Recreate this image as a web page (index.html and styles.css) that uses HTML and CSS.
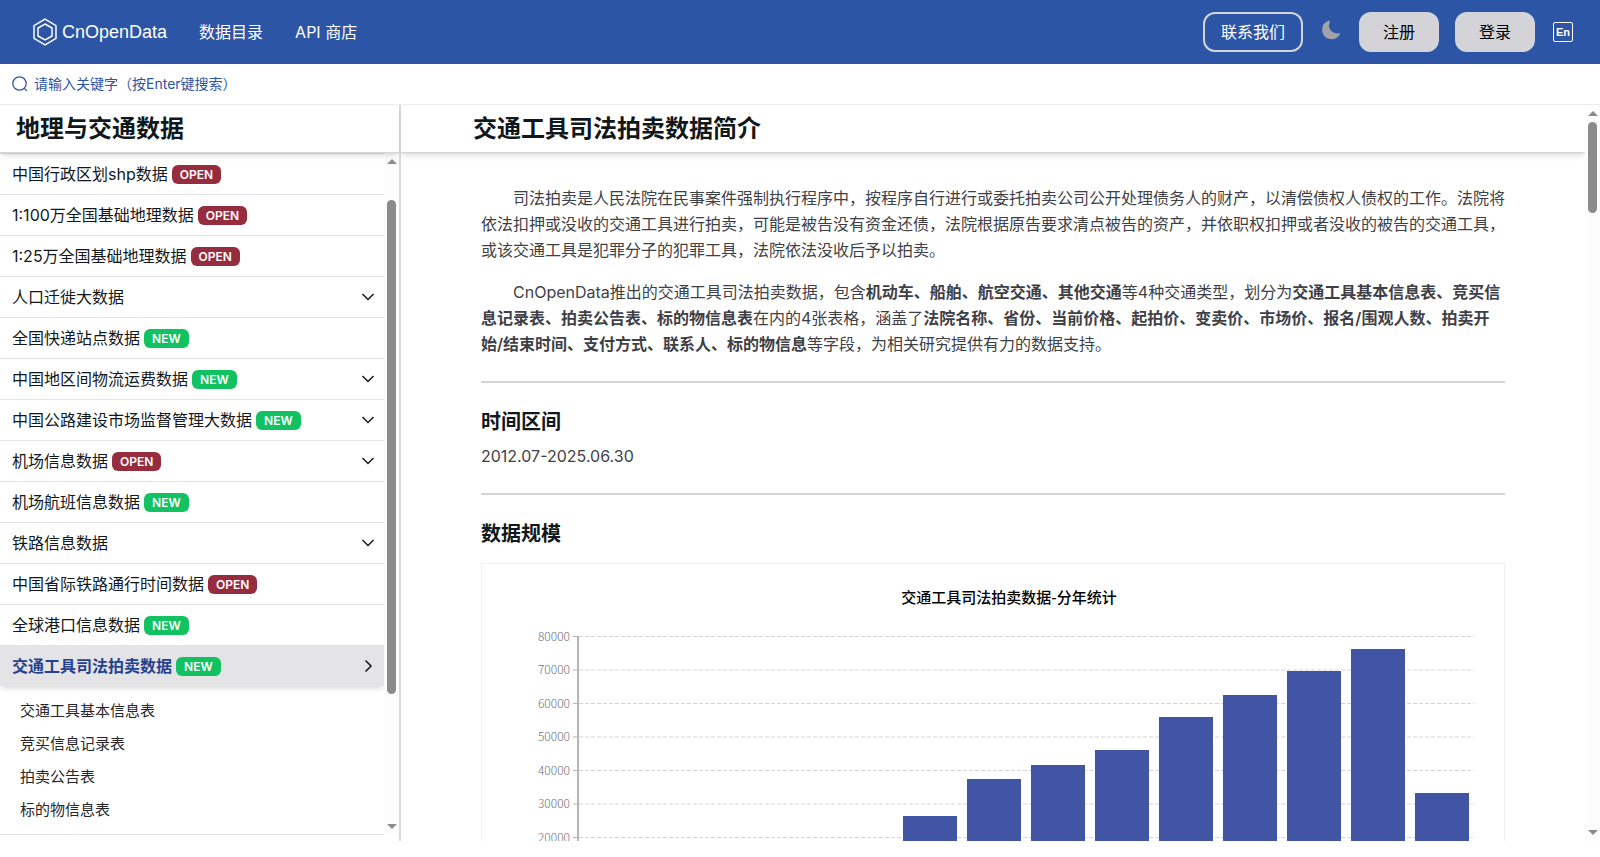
FILE: index.html
```
<!DOCTYPE html>
<html lang="zh-CN">
<head>
    <meta charset="UTF-8">
    <meta name="viewport" content="width=device-width, initial-scale=1.0">
    <title>交通工具司法拍卖数据 - CnOpenData</title>
    <link rel="stylesheet" href="styles.css">
</head>
<body>
    <header class="navbar">
        <a class="logo" href="#">
            <svg class="logo-icon" viewBox="0 0 24 28" aria-hidden="true">
                <path d="M12 1.2 23 7.6v12.8L12 26.8 1 20.4V7.6z"/>
                <path d="M12 6 19 10v8l-7 4-7-4v-8z"/>
            </svg>
            <span class="logo-text">CnOpenData</span>
        </a>
        <nav class="nav-links">
            <a href="#">数据目录</a>
            <a href="#">API 商店</a>
        </nav>
        <div class="nav-actions">
            <button type="button" class="button button-outline">联系我们</button>
            <button type="button" class="icon-button" aria-label="切换主题">
                <svg class="moon-icon" viewBox="0 0 24 24" aria-hidden="true">
                    <path d="M21.53 15.93c-.16-.27-.61-.69-1.73-.49a8.46 8.46 0 0 1-1.88.13 8.41 8.41 0 0 1-5.91-2.82 8.07 8.07 0 0 1-1.44-8.66c.44-1.01.13-1.54-.09-1.76s-.77-.55-1.83-.11a10.32 10.32 0 0 0-6.32 10.21 10.48 10.48 0 0 0 7.04 8.99 10 10 0 0 0 2.89.55c.16.01.32.02.48.02a10.5 10.5 0 0 0 8.47-4.27c.67-.93.49-1.519.32-1.79z"/>
                </svg>
            </button>
            <button type="button" class="button">注册</button>
            <button type="button" class="button">登录</button>
            <button type="button" class="icon-button" aria-label="English">
                <span class="lang-icon">En</span>
            </button>
        </div>
    </header>

    <form class="search-bar" role="search">
        <label class="search-label" for="keyword" aria-label="搜索">
            <svg class="search-icon" viewBox="0 0 16 16" aria-hidden="true">
                <circle cx="7.5" cy="7.5" r="6.7"/>
                <path d="m12.4 12.4 2.4 2.4"/>
            </svg>
        </label>
        <input type="text" id="keyword" class="search-input" placeholder="请输入关键字（按Enter键搜索）">
    </form>

    <div class="workspace">
        <aside class="sidebar">
            <h2 class="sidebar-title">地理与交通数据</h2>
            <div class="sidebar-body">
                <div class="menu">
                    <a class="menu-item" href="#">中国行政区划shp数据<span class="badge badge-open">OPEN</span></a>
                    <a class="menu-item" href="#">1:100万全国基础地理数据<span class="badge badge-open">OPEN</span></a>
                    <a class="menu-item" href="#">1:25万全国基础地理数据<span class="badge badge-open">OPEN</span></a>
                    <a class="menu-item" href="#">人口迁徙大数据<svg class="chevron" viewBox="0 0 14 14"><path d="m1.5 4 5.5 5.5L12.500 4"/></svg></a>
                    <a class="menu-item" href="#">全国快递站点数据<span class="badge badge-new">NEW</span></a>
                    <a class="menu-item" href="#">中国地区间物流运费数据<span class="badge badge-new">NEW</span><svg class="chevron" viewBox="0 0 14 14"><path d="m1.500 4 5.500 5.500L12.500 4"/></svg></a>
                    <a class="menu-item" href="#">中国公路建设市场监督管理大数据<span class="badge badge-new">NEW</span><svg class="chevron" viewBox="0 0 14 14"><path d="m1.500 4 5.500 5.500L12.500 4"/></svg></a>
                    <a class="menu-item" href="#">机场信息数据<span class="badge badge-open">OPEN</span><svg class="chevron" viewBox="0 0 14 14"><path d="m1.500 4 5.500 5.500L12.500 4"/></svg></a>
                    <a class="menu-item" href="#">机场航班信息数据<span class="badge badge-new">NEW</span></a>
                    <a class="menu-item" href="#">铁路信息数据<svg class="chevron" viewBox="0 0 14 14"><path d="m1.500 4 5.500 5.500L12.500 4"/></svg></a>
                    <a class="menu-item" href="#">中国省际铁路通行时间数据<span class="badge badge-open">OPEN</span></a>
                    <a class="menu-item" href="#">全球港口信息数据<span class="badge badge-new">NEW</span></a>
                    <a class="menu-item active" href="#">交通工具司法拍卖数据<span class="badge badge-new">NEW</span><svg class="chevron" viewBox="0 0 14 14"><path d="M4.500 1.500 10 7l-5.500 5.500"/></svg></a>
                    <div class="submenu">
                        <a href="#">交通工具基本信息表</a>
                        <a href="#">竞买信息记录表</a>
                        <a href="#">拍卖公告表</a>
                        <a href="#">标的物信息表</a>
                    </div>
                </div>
                <div class="scrollbar" aria-hidden="true">
                    <span class="arrow arrow-up"></span>
                    <div class="track track-sidebar"><span class="thumb"></span></div>
                    <span class="arrow arrow-down"></span>
                </div>
            </div>
        </aside>

        <main class="main">
            <div class="main-body">
                <h1 class="main-title">交通工具司法拍卖数据简介</h1>
                <article class="article">
                    <p>司法拍卖是人民法院在民事案件强制执行程序中，按程序自行进行或委托拍卖公司公开处理债务人的财产，以清偿债权人债权的工作。法院将依法扣押或没收的交通工具进行拍卖，可能是被告没有资金还债，法院根据原告要求清点被告的资产，并依职权扣押或者没收的被告的交通工具，或该交通工具是犯罪分子的犯罪工具，法院依法没收后予以拍卖。</p>
                    <p>CnOpenData推出的交通工具司法拍卖数据，包含<strong>机动车、船舶、航空交通、其他交通</strong>等4种交通类型，划分为<strong>交通工具基本信息表、竞买信息记录表、拍卖公告表、标的物信息表</strong>在内的4张表格，涵盖了<strong>法院名称、省份、当前价格、起拍价、变卖价、市场价、报名/围观人数、拍卖开始/结束时间、支付方式、联系人、标的物信息</strong>等字段，为相关研究提供有力的数据支持。</p>
                    <hr>
                    <h3>时间区间</h3>
                    <div class="period">2012.07-2025.06.30</div>
                    <hr>
                    <h3>数据规模</h3>
                    <div class="chart">
                        <svg viewBox="0 0 1022 400" role="img" aria-label="交通工具司法拍卖数据-分年统计">
                            <text class="chart-title" x="527" y="39">交通工具司法拍卖数据-分年统计</text>
                            <g class="chart-grid">
                                <path d="M97 72.5h895M97 106h895M97 139.5h895M97 173h895M97 206.5h895M97 240h895M97 273.5h895M97 307h895"/>
                            </g>
                            <g class="chart-axis">
                                <path d="M91 72.5h5M91 106h5M91 139.5h5M91 173h5M91 206.5h5M91 240h5M91 273.5h5M91 307h5"/>
                                <path class="chart-axis-line" d="M96 72v268"/>
                            </g>
                            <g class="chart-labels">
                                <text x="88" y="77">80000</text>
                                <text x="88" y="110">70000</text>
                                <text x="88" y="144">60000</text>
                                <text x="88" y="177">50000</text>
                                <text x="88" y="211">40000</text>
                                <text x="88" y="244">30000</text>
                                <text x="88" y="278">20000</text>
                            </g>
                            <g class="chart-bars">
                                <path d="M421 252h54v88h-54z"/>
                                <path d="M485 215h54v125h-54z"/>
                                <path d="M549 201h54v139h-54z"/>
                                <path d="M613 186h54v154h-54z"/>
                                <path d="M677 153h54v187h-54z"/>
                                <path d="M741 131h54v209h-54z"/>
                                <path d="M805 107h54v233h-54z"/>
                                <path d="M869 85h54v255h-54z"/>
                                <path d="M933 229h54v111h-54z"/>
                            </g>
                        </svg>
                    </div>
                </article>
            </div>
            <div class="scrollbar" aria-hidden="true">
                <span class="arrow arrow-up"></span>
                <div class="track track-main"><span class="thumb"></span></div>
                <span class="arrow arrow-down"></span>
            </div>
        </main>
    </div>
</body>
</html>
```
FILE: styles.css
```
* {
    box-sizing: border-box;
}

body {
    margin: 0;
    height: 100vh;
    display: flex;
    flex-direction: column;
    overflow: hidden;
    background: #ffffff;
    color: #11181c;
    font-family: Inter, "Noto Sans CJK SC", sans-serif;
    font-size: 16px;
    line-height: 24px;
}

a {
    color: inherit;
    text-decoration: none;
}

button,
input {
    font: inherit;
}

/* 顶部导航 */
.navbar {
    flex-shrink: 0;
    height: 64px;
    padding: 0 25px 0 32px;
    display: flex;
    align-items: center;
    gap: 32px;
    background: #2d55a5;
    color: #ffffff;
}

.logo {
    display: flex;
    align-items: center;
    gap: 4px;
}

.logo-icon {
    width: 26px;
    height: 28px;
    fill: none;
    stroke: #ffffff;
    stroke-width: 1.5;
}

.logo-text {
    font-family: "Liberation Sans", sans-serif;
    font-size: 18px;
}

.nav-links {
    display: flex;
    gap: 32px;
}

.nav-actions {
    margin-left: auto;
    display: flex;
    align-items: center;
    gap: 16px;
}

.button {
    min-width: 80px;
    height: 40px;
    padding: 0 16px;
    border: 2px solid #d4d4d8;
    border-radius: 12px;
    background: #d4d4d8;
    color: #000000;
    cursor: pointer;
}

.button-outline {
    background: transparent;
    color: #ffffff;
}

.icon-button {
    width: 24px;
    height: 24px;
    padding: 0;
    border: 0;
    background: transparent;
    display: flex;
    align-items: center;
    justify-content: center;
    cursor: pointer;
}

.moon-icon {
    width: 22px;
    height: 22px;
    margin-bottom: 4px;
    fill: #a1a1aa;
}

.lang-icon {
    width: 20px;
    height: 20px;
    border: 1px solid #ffffff;
    border-radius: 2px;
    color: #ffffff;
    font-family: "Liberation Sans", sans-serif;
    font-size: 11px;
    font-weight: bold;
    line-height: 18px;
}

/* 搜索 */
.search-bar {
    flex-shrink: 0;
    height: 41px;
    padding: 0 12px;
    display: flex;
    align-items: center;
    gap: 6px;
    border-bottom: 1px solid #ececee;
}

.search-label {
    display: flex;
}

.search-icon {
    width: 16px;
    height: 16px;
    fill: none;
    stroke: #2d55a5;
    stroke-width: 1.3;
}

.search-input {
    flex: 1;
    padding: 0;
    border: 0;
    outline: 0;
    background: transparent;
    font-size: 14px;
}

.search-input::placeholder {
    color: #2d55a5;
    opacity: 1;
}

.workspace {
    flex: 1;
    min-height: 0;
    margin-bottom: 16px;
    display: flex;
}

/* 左侧目录 */
.sidebar {
    width: 25%;
    flex-shrink: 0;
    padding-bottom: 6px;
    display: flex;
    flex-direction: column;
    border-right: 1px solid #d9d9dc;
}

.sidebar-title,
.main-title {
    position: relative;
    z-index: 1;
    flex-shrink: 0;
    margin: 0;
    height: 48px;
    border-bottom: 1px solid #d4d4d8;
    box-shadow: 0 4px 6px -1px rgba(0, 0, 0, 0.1), 0 2px 4px -2px rgba(0, 0, 0, 0.1);
    font-size: 24px;
    font-weight: 600;
    line-height: 48px;
}

.sidebar-title {
    padding: 0 16px;
}

.sidebar-body {
    flex: 1;
    min-height: 0;
    display: flex;
}

.menu {
    flex: 1;
    overflow: hidden;
    border-top: 1px solid #e4e4e7;
    border-bottom: 1px solid #e4e4e7;
}

.menu-item {
    height: 41px;
    padding: 0 9px 0 12px;
    display: flex;
    align-items: center;
    border-bottom: 1px solid #e4e4e7;
    white-space: nowrap;
}

.menu-item.active {
    height: 40px;
    border-bottom: 0;
    background: #e4e4e7;
    box-shadow: 0 4px 6px -1px rgba(0, 0, 0, 0.1), 0 2px 4px -2px rgba(0, 0, 0, 0.1);
    color: #254291;
    font-weight: 600;
}

.badge {
    height: 19px;
    margin-left: 4px;
    padding: 0 8px;
    border-radius: 6px;
    color: #ffffff;
    font-size: 12px;
    font-weight: 600;
    line-height: 19px;
}

.badge-open {
    background: #962d3e;
}

.badge-new {
    background: #12c261;
}

.chevron {
    width: 14px;
    height: 14px;
    margin-left: auto;
    fill: none;
    stroke: #11181c;
    stroke-width: 1.5;
}

.submenu {
    padding: 8px 20px;
    color: #27272a;
    font-size: 15px;
}

.submenu a {
    display: block;
    line-height: 33px;
}

/* 滚动条 */
.scrollbar {
    width: 15px;
    flex-shrink: 0;
    padding: 6px 3px;
    display: flex;
    flex-direction: column;
    align-items: center;
    background: #fcfcfc;
}

.arrow {
    border: 5px solid transparent;
}

.arrow-up {
    border-top: 0;
    border-bottom-color: #8b8b8b;
}

.arrow-down {
    border-bottom: 0;
    border-top-color: #8b8b8b;
}

.track {
    flex: 1;
    width: 9px;
    margin: 6px 0;
}

.track-sidebar {
    padding-top: 30px;
}

.track .thumb {
    display: block;
    height: 80%;
    border-radius: 5px;
    background: #8b8b8b;
}

.track-main .thumb {
    height: 13%;
}

/* 正文 */
.main {
    flex: 1;
    min-width: 0;
    display: flex;
    border-left: 1px solid #d9d9dc;
}

.main-body {
    flex: 1;
    min-width: 0;
    overflow: hidden;
}

.main-title {
    padding: 0 72px;
}

.article {
    padding: 32px 80px;
    color: #3f3f46;
    line-height: 26px;
}

.article p {
    margin: 0 0 16px;
    text-indent: 32px;
}

.article strong {
    font-weight: 600;
}

.article hr {
    height: 2px;
    margin: 24px 0;
    border: 0;
    background: #d4d4d8;
}

.article h3 {
    margin: 0;
    color: #11181c;
    font-size: 20px;
    font-weight: 600;
    line-height: 30px;
}

.period {
    margin-top: 6px;
}

.chart {
    margin-top: 14px;
    border: 1px solid #f0f0f0;
}

.chart svg {
    display: block;
    width: 100%;
}

.chart text {
    font-family: "Noto Sans CJK SC", sans-serif;
}

.chart-title {
    fill: #000000;
    font-size: 15px;
    font-weight: 500;
    text-anchor: middle;
}

.chart-grid {
    stroke: #d4d4d8;
    stroke-dasharray: 4 2;
}

.chart-axis {
    stroke: #b4b4b8;
}

.chart-axis-line {
    stroke-width: 2;
}

.chart-labels {
    fill: #6e7079;
    font-size: 12px;
    font-weight: 300;
    text-anchor: end;
}

.chart-bars {
    fill: #4056a4;
}
```
